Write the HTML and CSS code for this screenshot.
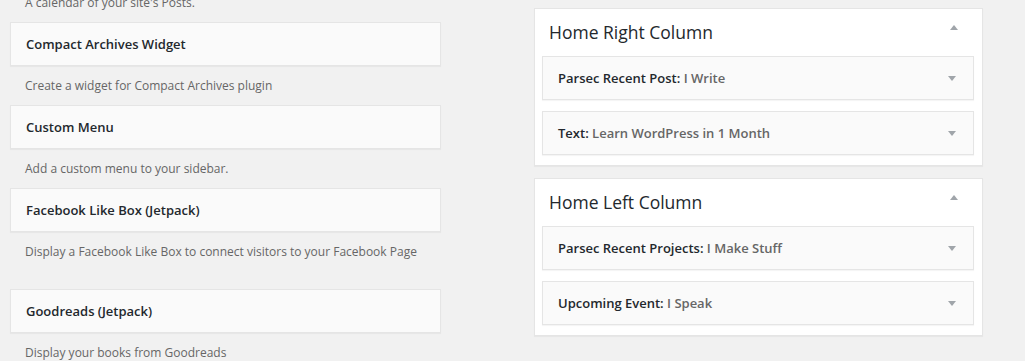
FILE: index.html
```html
<!DOCTYPE html>
<html>
<head>
	<title>Widgets</title>
	<link rel="stylesheet" href="styles.css">
</head>
<body>
	<div class="page">
		<div class="available">
			<div class="desc">A calendar of your site's Posts.</div>
			<div class="widget"><h3>Compact Archives Widget</h3></div>
			<div class="desc">Create a widget for Compact Archives plugin</div>
			<div class="widget"><h3>Custom Menu</h3></div>
			<div class="desc">Add a custom menu to your sidebar.</div>
			<div class="widget"><h3>Facebook Like Box (Jetpack)</h3></div>
			<div class="desc tall">Display a Facebook Like Box to connect visitors to your Facebook Page</div>
			<div class="widget"><h3>Goodreads (Jetpack)</h3></div>
			<div class="desc">Display your books from Goodreads</div>
		</div>
		<div class="sidebars">
			<div class="sidebar">
				<div class="sidebar-name">
					<h2>Home Right Column</h2>
					<span class="arrow up"></span>
				</div>
				<div class="widget placed">
					<h3>Parsec Recent Post:<span class="in-title"> I Write</span></h3>
					<span class="arrow down"></span>
				</div>
				<div class="widget placed">
					<h3>Text:<span class="in-title"> Learn WordPress in 1 Month</span></h3>
					<span class="arrow down"></span>
				</div>
			</div>
			<div class="sidebar">
				<div class="sidebar-name">
					<h2>Home Left Column</h2>
					<span class="arrow up"></span>
				</div>
				<div class="widget placed">
					<h3>Parsec Recent Projects:<span class="in-title"> I Make Stuff</span></h3>
					<span class="arrow down"></span>
				</div>
				<div class="widget placed">
					<h3>Upcoming Event:<span class="in-title"> I Speak</span></h3>
					<span class="arrow down"></span>
				</div>
			</div>
		</div>
	</div>
</body>
</html>
```

FILE: styles.css
```css
*{
	padding: 0;
	margin: 0;
	box-sizing: border-box;
}
body{
	background: #f1f1f1;
	font-family: "Open Sans", "Liberation Sans", sans-serif;
	font-size: 13px;
	color: #444;
	overflow: hidden;
}
.page{
	display: flex;
	align-items: flex-start;
	gap: 93px;
	padding-left: 10px;
}
.available{
	width: 431px;
	margin-top: -17px;
}
.desc{
	height: 39px;
	padding: 11px 15px 0;
	font-size: 12px;
	line-height: 18px;
	color: #666;
}
.desc.tall{
	height: 57px;
}
.widget{
	background: #fafafa;
	border: 1px solid #e5e5e5;
	box-shadow: 0 1px 1px rgba(0, 0, 0, 0.04);
}
.widget h3{
	font-size: 13px;
	font-weight: 600;
	line-height: 42px;
	padding: 0 15px;
	color: #23282d;
}
.sidebars{
	width: 449px;
	padding-top: 8px;
	display: flex;
	flex-direction: column;
	gap: 12px;
}
.sidebar{
	background: #fff;
	border: 1px solid #e5e5e5;
	box-shadow: 0 1px 1px rgba(0, 0, 0, 0.04);
	padding: 0 8px 10px 7px;
	display: flex;
	flex-direction: column;
	gap: 11px;
}
.sidebar-name{
	height: 36px;
	display: flex;
	align-items: center;
	justify-content: space-between;
	padding: 10px 16px 0 7px;
}
.sidebar-name h2{
	font-size: 17.5px;
	font-weight: 400;
	color: #23282d;
	line-height: 24px;
}
.placed{
	display: flex;
	align-items: center;
	justify-content: space-between;
	padding-right: 17px;
}
.in-title{
	color: #666;
}
.arrow{
	width: 0;
	height: 0;
	border-left: 4.5px solid transparent;
	border-right: 4.5px solid transparent;
}
.arrow.up{
	border-bottom: 5px solid #a0a5aa;
	margin-bottom: 10px;
}
.arrow.down{
	border-top: 5px solid #a0a5aa;
}
```
